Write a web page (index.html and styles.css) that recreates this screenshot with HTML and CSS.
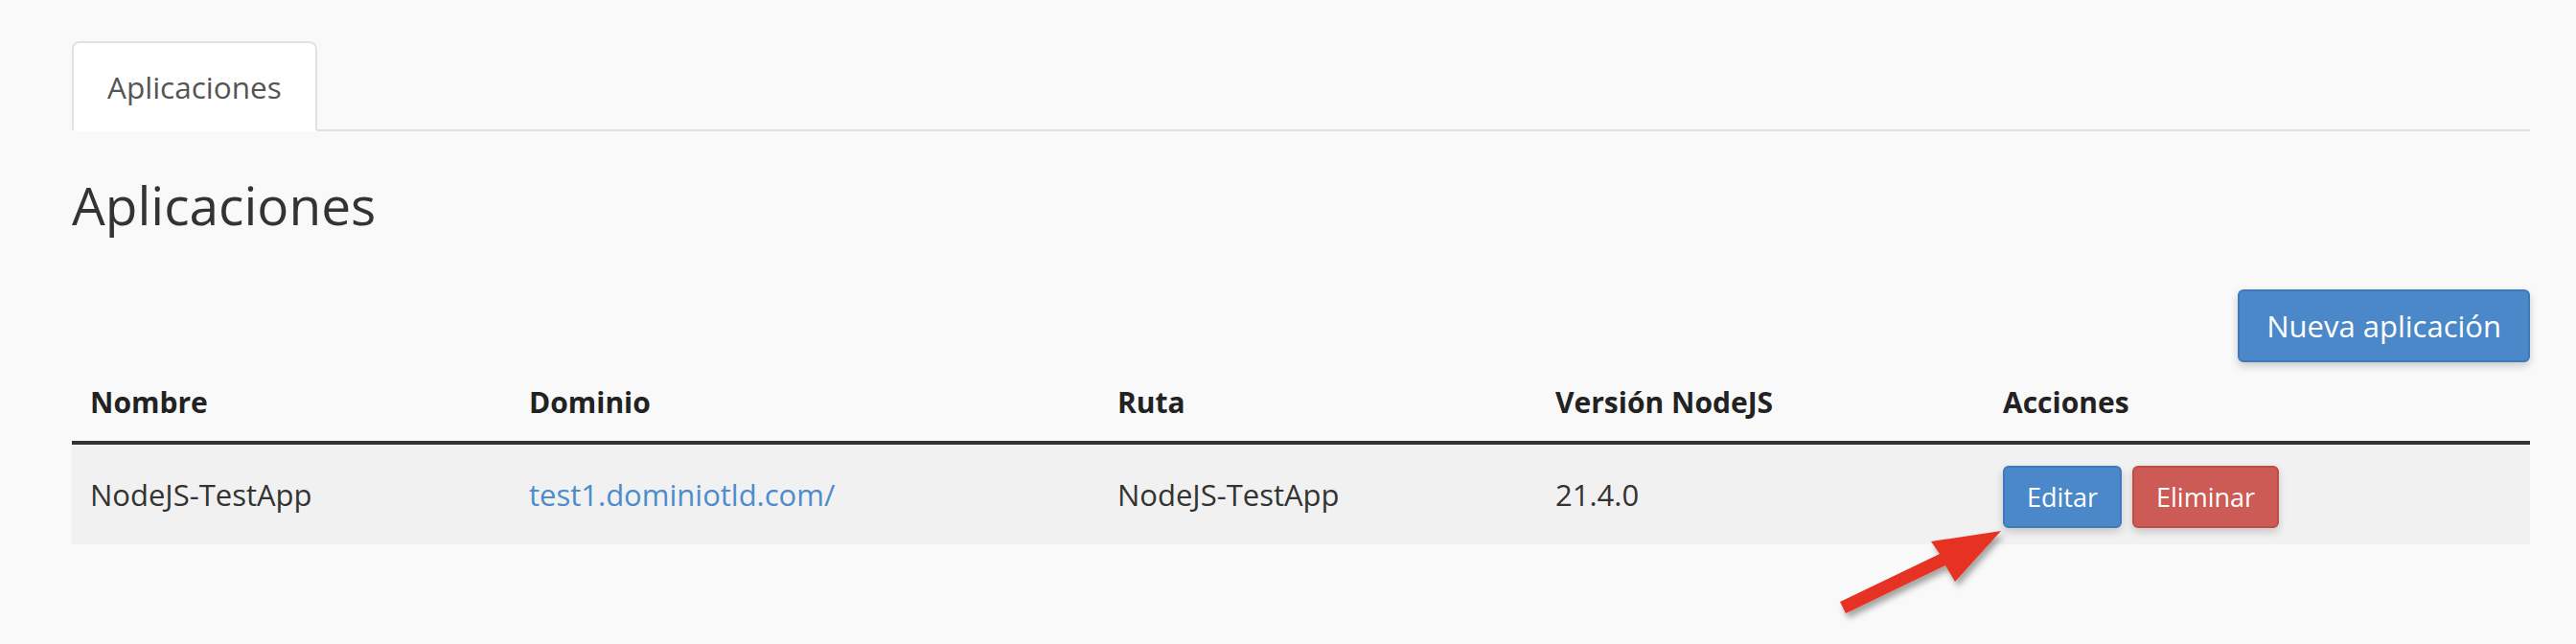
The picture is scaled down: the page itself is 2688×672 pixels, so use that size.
FILE: index.html
```html
<!DOCTYPE html>
<html lang="es">
<head>
<meta charset="utf-8">
<title>Aplicaciones</title>
<link rel="stylesheet" href="styles.css">
</head>
<body>
<div class="page">
  <ul class="tabs">
    <li class="tab active">Aplicaciones</li>
  </ul>
  <h1 class="title">Aplicaciones</h1>
  <div class="toolbar">
    <button class="btn btn-primary btn-lg">Nueva aplicación</button>
  </div>
  <table class="apps">
    <colgroup>
      <col class="c1"><col class="c2"><col class="c3"><col class="c4"><col class="c5">
    </colgroup>
    <thead>
      <tr>
        <th>Nombre</th>
        <th>Dominio</th>
        <th>Ruta</th>
        <th>Versión NodeJS</th>
        <th>Acciones</th>
      </tr>
    </thead>
    <tbody>
      <tr>
        <td>NodeJS-TestApp</td>
        <td><a class="link" href="#">test1.dominiotld.com/</a></td>
        <td>NodeJS-TestApp</td>
        <td>21.4.0</td>
        <td class="actions">
          <div class="action-group">
            <button class="btn btn-primary btn-sm">Editar</button>
            <button class="btn btn-danger btn-sm">Eliminar</button>
          </div>
        </td>
      </tr>
    </tbody>
  </table>
  <svg class="arrow" width="200" height="110" viewBox="1900 540 200 110" aria-hidden="true">
    <defs>
      <filter id="sh" x="-20%" y="-20%" width="140%" height="140%">
        <feDropShadow dx="3" dy="5" stdDeviation="3" flood-color="#000" flood-opacity="0.35"/>
      </filter>
    </defs>
    <g filter="url(#sh)">
      <polygon fill="#e53322" points="2088,554 2015,565 2024,578 1920,628 1926,640 2030,590 2040,607"/>
    </g>
  </svg>
</div>
</body>
</html>
```
FILE: styles.css
```css
* { box-sizing: border-box; }
html, body { margin: 0; padding: 0; }
body {
  background: #f9f9f9;
  font-family: "Open Sans", "Noto Sans", sans-serif;
  color: #333;
  font-size: 31px;
  width: 2688px;
  height: 672px;
  overflow: hidden;
}
.page {
  position: relative;
  padding: 43px 48px 0 75px;
  height: 672px;
}
.tabs {
  list-style: none;
  margin: 0;
  padding: 0;
  display: flex;
  border-bottom: 2px solid #e0e0e0;
}
.tab {
  height: 94px;
  padding: 0 35px;
  display: flex;
  align-items: center;
  font-size: 31.5px;
  color: #555;
  margin-bottom: -2px;
}
.tab.active {
  background: #fff;
  border: 2px solid #e2e2e2;
  border-bottom-color: #fff;
  border-radius: 8px 8px 0 0;
}
.title {
  margin: 46px 0 0;
  font-size: 55px;
  font-weight: 400;
  line-height: 62px;
  color: #333;
}
.toolbar {
  display: flex;
  justify-content: flex-end;
  margin-top: 57px;
}
.btn {
  font-family: "Open Sans", "Noto Sans", sans-serif;
  color: #fff;
  border: 2px solid transparent;
  border-radius: 6px;
  box-shadow: 0 4px 8px rgba(0,0,0,0.18);
  cursor: pointer;
}
.btn-primary {
  background: #4b88c9;
  border-color: #3f79b7;
}
.btn-danger {
  background: #cb5b54;
  border-color: #bd4d47;
}
.btn-lg {
  height: 76px;
  padding: 0 28px;
  font-size: 31px;
}
.btn-sm {
  height: 65px;
  padding: 0 23px;
  font-size: 27px;
}
.action-group {
  display: flex;
  gap: 11px;
}
.apps {
  width: 100%;
  border-collapse: collapse;
  table-layout: fixed;
}
.c1 { width: 458px; }
.c2 { width: 614px; }
.c3 { width: 457px; }
.c4 { width: 467px; }
.c5 { width: auto; }
.apps th {
  text-align: left;
  font-weight: 700;
  font-size: 30px;
  height: 84px;
  padding: 0 19px;
  border-bottom: 4px solid #333;
  vertical-align: middle;
  color: #222;
}
.apps td {
  height: 106px;
  padding: 0 19px;
  background: #f1f1f1;
  vertical-align: middle;
  color: #333;
}
.link {
  color: #4d8ccc;
  text-decoration: none;
}
.actions { white-space: nowrap; padding-top: 4px !important; }
.arrow {
  position: absolute;
  left: 1900px;
  top: 540px;
}
```
